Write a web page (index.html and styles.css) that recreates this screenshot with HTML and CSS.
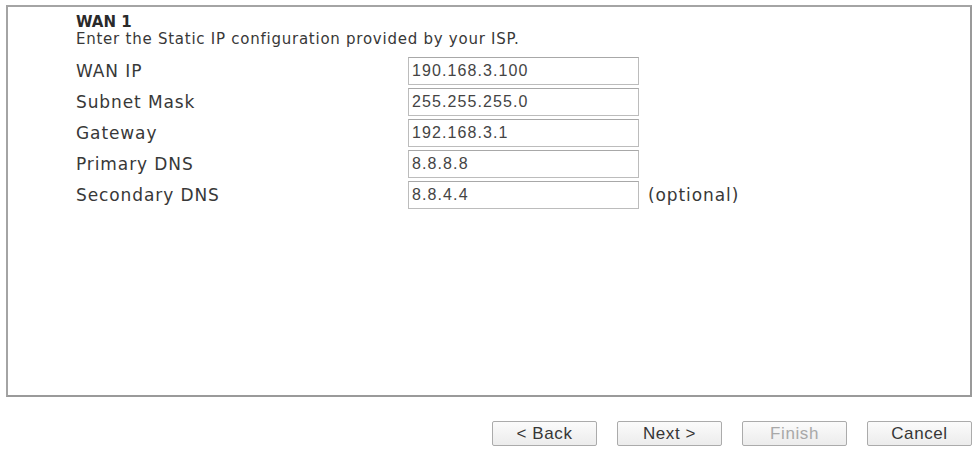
FILE: index.html
```html
<!DOCTYPE html>
<html>
<head>
<meta charset="utf-8">
<link rel="stylesheet" href="styles.css">
</head>
<body>
<div class="panel">
  <div class="title">WAN 1</div>
  <div class="intro">Enter the Static IP configuration provided by your ISP.</div>
  <div class="form">
    <div class="label">WAN IP</div>
    <div class="field"><input class="input" type="text" value="190.168.3.100"></div>
    <div class="note"></div>
    <div class="label">Subnet Mask</div>
    <div class="field"><input class="input" type="text" value="255.255.255.0"></div>
    <div class="note"></div>
    <div class="label">Gateway</div>
    <div class="field"><input class="input" type="text" value="192.168.3.1"></div>
    <div class="note"></div>
    <div class="label">Primary DNS</div>
    <div class="field"><input class="input" type="text" value="8.8.8.8"></div>
    <div class="note"></div>
    <div class="label">Secondary DNS</div>
    <div class="field"><input class="input" type="text" value="8.8.4.4"></div>
    <div class="note">(optional)</div>
  </div>
</div>
<div class="actions">
  <button class="btn" type="button">&lt; Back</button>
  <button class="btn" type="button">Next &gt;</button>
  <button class="btn disabled" type="button">Finish</button>
  <button class="btn" type="button">Cancel</button>
</div>
</body>
</html>
```

FILE: styles.css
```css
html, body {
  margin: 0;
  padding: 0;
  background: #ffffff;
}
body {
  width: 976px;
  height: 453px;
  overflow: hidden;
  font-family: "DejaVu Sans", Verdana, sans-serif;
  font-size: 14px;
  color: #383838;
}
.panel {
  box-sizing: border-box;
  margin: 5px 0 0 6px;
  width: 966px;
  height: 392px;
  border: 2px solid #a4a4a4;
  border-right-color: #9a9a9a;
  border-bottom-color: #9a9a9a;
  padding: 6px 0 0 68px;
}
.title {
  font-weight: bold;
  font-size: 15px;
  line-height: 18px;
  color: #2a2a2a;
}
.intro {
  font-size: 15px;
  line-height: 17px;
  letter-spacing: 0.75px;
}
.form {
  margin-top: 9px;
  display: grid;
  grid-template-columns: 332px 231px auto;
  grid-auto-rows: 28px;
  row-gap: 3px;
  align-items: center;
}
.label {
  font-size: 17px;
  letter-spacing: 0.9px;
  line-height: 19px;
}
.field {
  height: 28px;
}
.input {
  box-sizing: border-box;
  width: 231px;
  height: 28px;
  margin: 0;
  border: 1px solid #bcbcbc;
  border-top-color: #a8a8a8;
  padding: 0 0 0 3px;
  font-family: "Liberation Sans", Arial, sans-serif;
  font-size: 16px;
  letter-spacing: 1.1px;
  color: #444444;
  background: #ffffff;
  outline: none;
}
.note {
  padding-left: 9px;
  line-height: 19px;
  font-size: 17px;
  letter-spacing: 0.9px;
}
.actions {
  margin-top: 24px;
  display: flex;
  justify-content: flex-end;
  gap: 20px;
  padding-right: 4px;
}
.btn {
  box-sizing: border-box;
  width: 105px;
  height: 25px;
  margin: 0;
  padding: 0;
  border: 1px solid #ababab;
  border-radius: 2px;
  background: linear-gradient(#fbfbfb, #ececec);
  font-family: "Liberation Sans", Arial, sans-serif;
  font-size: 17px;
  letter-spacing: 0.6px;
  color: #363636;
}
.btn.disabled {
  color: #a8a8a8;
}
```
